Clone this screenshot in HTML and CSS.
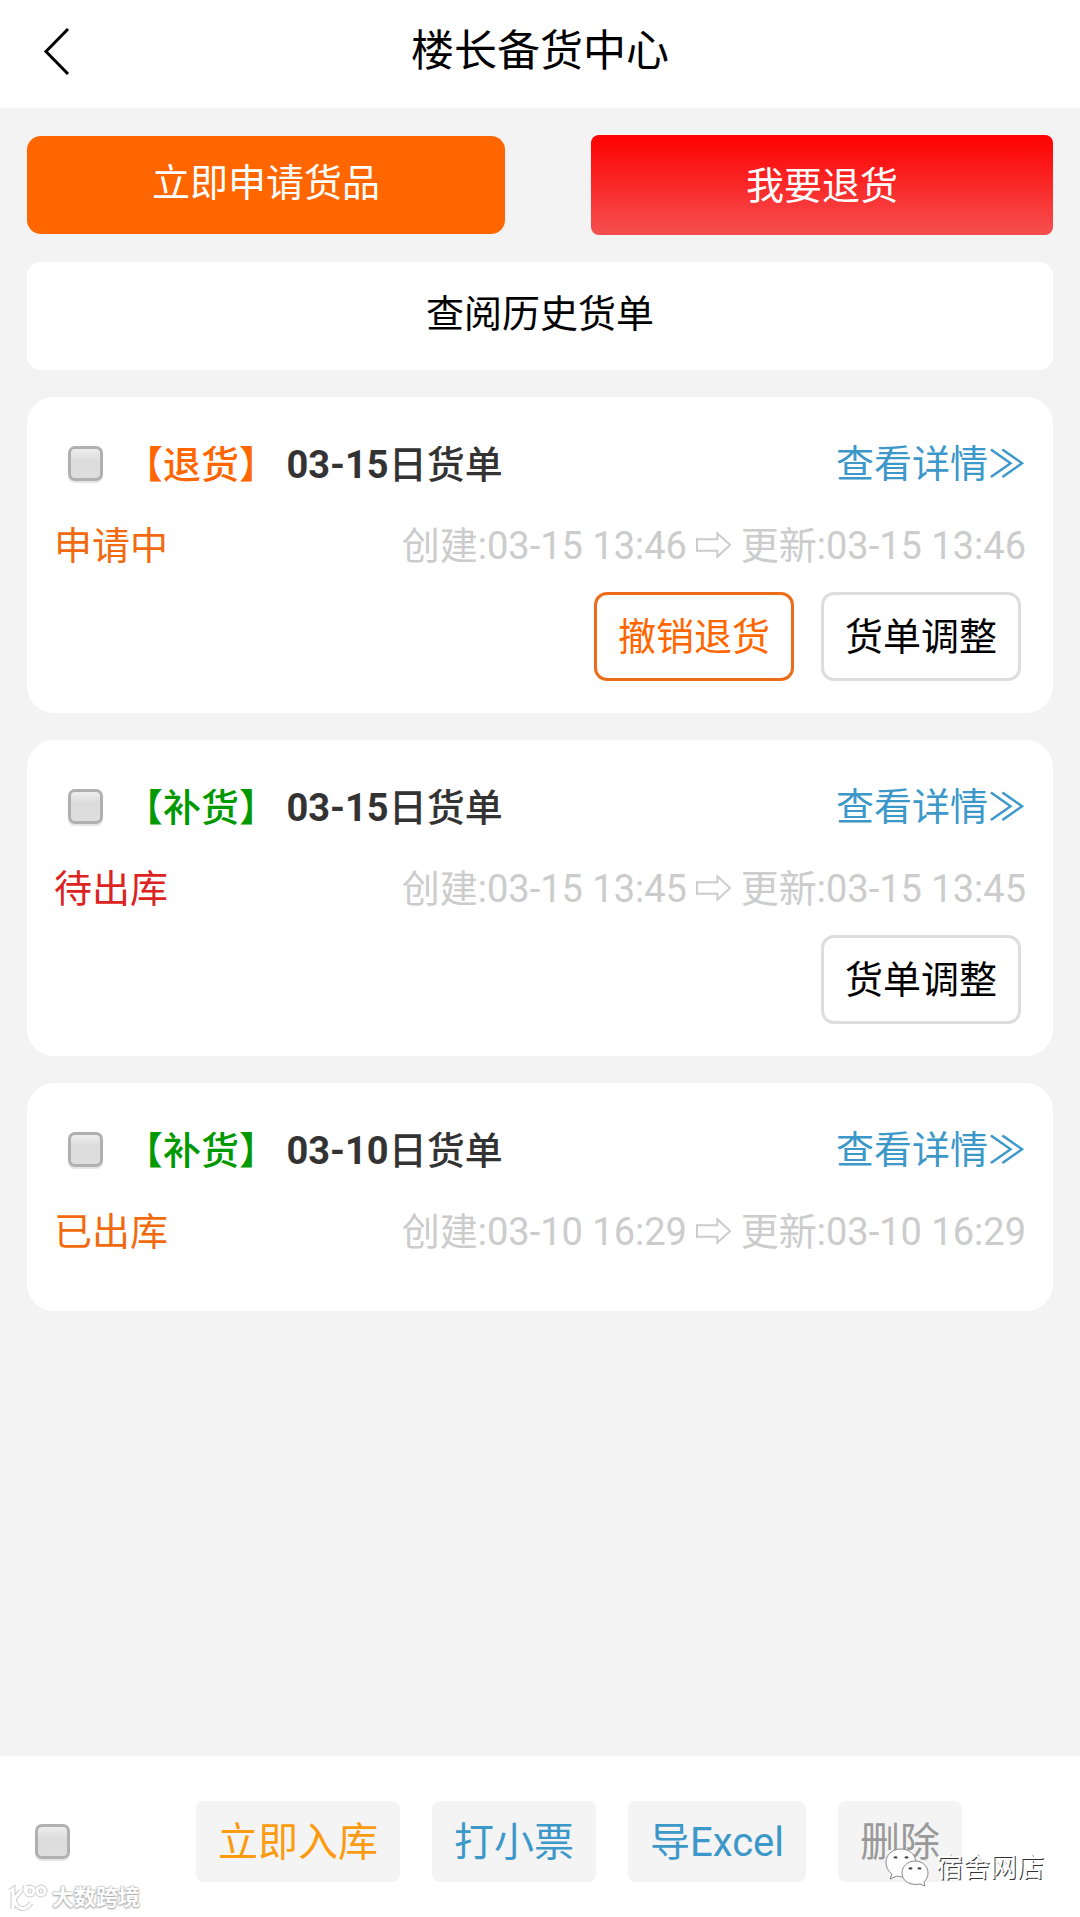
FILE: index.html
```html
<!DOCTYPE html>
<html lang="zh-CN">
<head>
    <meta charset="UTF-8">
    <meta name="viewport" content="width=device-width, initial-scale=1.0">
    <title>楼长备货中心</title>
    <link rel="stylesheet" href="styles.css">
</head>
<body>
    <!-- 顶部导航 -->
    <header class="header">
        <a class="back" href="#" aria-label="返回">
            <svg width="28" height="50" viewBox="0 0 28 50"><path d="M26 3L4 25.500L26 48" fill="none" stroke="#000" stroke-width="3"/></svg>
        </a>
        <h1>楼长备货中心</h1>
    </header>

    <main class="main">
        <div class="top-actions">
            <button class="apply-btn">立即申请货品</button>
            <button class="return-btn">我要退货</button>
        </div>
        <button class="history-btn">查阅历史货单</button>

        <!-- 货单列表 -->
        <div class="order">
            <div class="order-head">
                <input type="checkbox" id="order1">
                <label for="order1"><span class="tag tag-return">【退货】</span> <b>03-15</b>日货单</label>
                <a href="#">查看详情≫</a>
            </div>
            <div class="order-info">
                <span class="status">申请中</span>
                <span class="time">创建:03-15 13:46 <svg class="arrow" viewBox="0 0 36 28"><path d="M1 8H22V2L35 14L22 26V20H1Z"/></svg> 更新:03-15 13:46</span>
            </div>
            <div class="order-actions">
                <button class="cancel-btn">撤销退货</button>
                <button>货单调整</button>
            </div>
        </div>

        <div class="order">
            <div class="order-head">
                <input type="checkbox" id="order2">
                <label for="order2"><span class="tag">【补货】</span> <b>03-15</b>日货单</label>
                <a href="#">查看详情≫</a>
            </div>
            <div class="order-info">
                <span class="status status-wait">待出库</span>
                <span class="time">创建:03-15 13:45 <svg class="arrow" viewBox="0 0 36 28"><path d="M1 8H22V2L35 14L22 26V20H1Z"/></svg> 更新:03-15 13:45</span>
            </div>
            <div class="order-actions">
                <button>货单调整</button>
            </div>
        </div>

        <div class="order">
            <div class="order-head">
                <input type="checkbox" id="order3">
                <label for="order3"><span class="tag">【补货】</span> <b>03-10</b>日货单</label>
                <a href="#">查看详情≫</a>
            </div>
            <div class="order-info">
                <span class="status">已出库</span>
                <span class="time">创建:03-10 16:29 <svg class="arrow" viewBox="0 0 36 28"><path d="M1 8H22V2L35 14L22 26V20H1Z"/></svg> 更新:03-10 16:29</span>
            </div>
        </div>
    </main>

    <!-- 底部操作栏 -->
    <footer class="footer">
        <input type="checkbox" aria-label="全选">
        <div class="footer-actions">
            <button class="stock-btn">立即入库</button>
            <button>打小票</button>
            <button>导Excel</button>
            <button class="delete-btn">删除</button>
        </div>

        <!-- 水印 -->
        <div class="mark mark-left">
            <svg width="40" height="28" viewBox="0 0 40 28">
                <g fill="none" stroke="#ccc" stroke-width="5"><path d="M2 7L5 5V25M13 7L6 15C9 27 18 27 23 19M17 1V9"/><circle cx="22" cy="7" r="4"/><circle cx="33" cy="7" r="4"/></g>
                <g fill="none" stroke="#fff" stroke-width="3"><path d="M2 7L5 5V25M13 7L6 15C9 27 18 27 23 19M17 1V9"/><circle cx="22" cy="7" r="4"/><circle cx="33" cy="7" r="4"/></g>
            </svg>
            <span>大数跨境</span>
        </div>
        <div class="mark mark-right">
            <svg width="44" height="40" viewBox="0 0 44 40">
                <g fill="#fff" stroke="#888" stroke-width="1">
                    <path d="M16 1C7 1 1 7 1 14C1 19 3 23 7 26L5 31L12 28C25 32 32 22 31 14C30 6 24 1 16 1Z"/>
                    <path d="M30 13C22 13 17 19 17 25C17 33 25 38 35 36L40 38L39 34C42 31 43 28 43 25C43 18 37 13 30 13Z"/>
                </g>
                <g fill="none" stroke="#444" stroke-width="2"><path d="M9 10A2 2 0 0 1 12 10M20 10A2 2 0 0 1 23 10M24 21A2 2 0 0 1 27 21M33 21A2 2 0 0 1 36 21"/></g>
            </svg>
            <span>宿舍网店</span>
        </div>
    </footer>
</body>
</html>
```
FILE: styles.css
```css
* {
    box-sizing: border-box;
}

body {
    display: flex;
    flex-direction: column;
    min-height: 100vh;
    margin: 0;
    background-color: #f3f3f3;
    color: #000;
    font-family: Roboto, "Noto Sans CJK SC", sans-serif;
    font-size: 38px;
    line-height: 44px;
}

a {
    color: #3c98c9;
    text-decoration: none;
}

button {
    font: inherit;
    color: inherit;
    border: none;
    padding: 0;
    cursor: pointer;
}

input[type="checkbox"] {
    appearance: none;
    flex: none;
    width: 35px;
    height: 35px;
    margin: 0;
    border: 3px solid #b0b0b0;
    border-radius: 7px;
    background: linear-gradient(#ededed, #dcdcdc 40%, #dedede);
    box-shadow: 0 2px 1px #e4e4e4;
}

/* 顶部导航 */
.header {
    position: relative;
    height: 108px;
    padding-top: 26px;
    background-color: #fff;
}

.header h1 {
    margin: 0;
    font-size: 43px;
    font-weight: normal;
    line-height: 50px;
    text-align: center;
}

.back {
    position: absolute;
    left: 42px;
    top: 26px;
}

.back svg {
    display: block;
}

.main {
    flex: 1;
    padding: 27px;
}

.top-actions {
    display: grid;
    grid-template-columns: 478fr 462fr;
    column-gap: 86px;
    align-items: center;
}

.apply-btn {
    height: 98px;
    padding-bottom: 4px;
    background-color: #ff6600;
    border-radius: 14px;
    color: #fff;
}

.return-btn {
    height: 100px;
    padding-top: 2px;
    background: linear-gradient(#ff0000, #f55050);
    border-radius: 8px;
    color: #fff;
}

.history-btn {
    display: block;
    width: 100%;
    height: 108px;
    margin-top: 27px;
    padding-bottom: 4px;
    background-color: #fff;
    border-radius: 14px;
}

/* 货单卡片 */
.order {
    min-height: 228px;
    margin-top: 27px;
    padding: 27px 27px 32px;
    background-color: #fff;
    border-radius: 27px;
}

.order-head {
    display: flex;
    align-items: center;
    height: 79px;
    padding-left: 14px;
}

.order-head label {
    margin-left: 22px;
    padding-top: 3px;
    color: #333;
    font-weight: 500;
}

.order-head a {
    margin-left: auto;
}

.tag {
    color: #009900;
}

.tag-return {
    color: #ff6600;
}

.order-info {
    display: flex;
    align-items: center;
    justify-content: space-between;
    height: 85px;
}

.status {
    color: #f26a0f;
}

.status-wait {
    color: #dd2222;
}

.time {
    color: #ccc;
}

.arrow {
    width: 35px;
    height: 28px;
    fill: none;
    stroke: #ccc;
    stroke-width: 2;
}

.order-actions {
    display: flex;
    justify-content: flex-end;
    gap: 27px;
    margin-top: 4px;
    padding-right: 5px;
}

.order-actions button {
    height: 89px;
    padding: 1px 21px 0;
    background-color: #fff;
    border: 3px solid #ddd;
    border-radius: 13px;
}

.order-actions .cancel-btn {
    border-color: #eb6d1a;
    color: #ff6600;
}

/* 底部操作栏 */
.footer {
    position: relative;
    display: flex;
    align-items: center;
    padding: 45px 35px 35px;
    background-color: #fff;
}

.footer-actions {
    display: flex;
    gap: 32px;
    margin-left: 126px;
}

.footer-actions button {
    height: 81px;
    padding: 3px 22px 0;
    background-color: #f4f4f4;
    border-radius: 8px;
    color: #3c98c9;
    font-size: 40px;
}

.footer-actions .stock-btn {
    color: #fa9b10;
}

.footer-actions .delete-btn {
    color: #999;
}

/* 水印 */
.mark {
    position: absolute;
    display: flex;
    align-items: center;
    color: #fff;
}

.mark-left {
    left: 8px;
    bottom: 5px;
    gap: 4px;
    font-size: 22px;
    font-weight: bold;
    line-height: 28px;
    text-shadow: 0 0 2px #aaa, 0 0 2px #aaa, 0 1px 2px #aaa;
}

.mark-right {
    right: 36px;
    bottom: 29px;
    gap: 7px;
    font-size: 27px;
    line-height: 32px;
    text-shadow: 1px 1px 0 #333;
}
```
